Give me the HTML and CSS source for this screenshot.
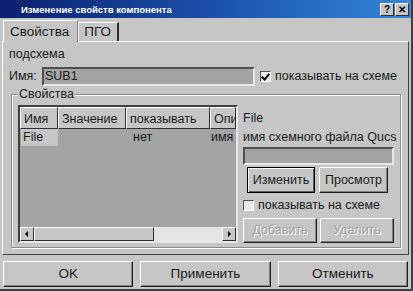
FILE: index.html
```html
<!DOCTYPE html>
<html lang="ru">
<head>
    <meta charset="UTF-8">
    <title>Изменение свойств компонента</title>
    <link rel="stylesheet" href="styles.css">
</head>
<body>
    <div class="dialog">
        <div class="titlebar">
            <span class="title">Изменение свойств компонента</span>
            <div class="title-buttons">
                <span class="title-btn">?</span>
                <span class="title-btn">&#x2715;</span>
            </div>
        </div>

        <div class="tabs">
            <div class="tab active">Свойства</div>
            <div class="tab">ПГО</div>
        </div>

        <div class="panel">
            <div class="caption">подсхема</div>
            <div class="name-row">
                <span class="name-label">Имя:</span>
                <div class="input name-input">SUB1</div>
                <label class="check"><span class="box checked"></span>показывать на схеме</label>
            </div>

            <div class="group">
                <div class="group-title">Свойства</div>
                <div class="group-body">
                    <div class="table">
                        <div class="table-head">
                            <div class="th col-name">Имя</div>
                            <div class="th col-value">Значение</div>
                            <div class="th col-show">показывать</div>
                            <div class="th col-desc">Опи</div>
                        </div>
                        <div class="table-row">
                            <div class="td col-name selected">File</div>
                            <div class="td col-value"></div>
                            <div class="td col-show">нет</div>
                            <div class="td col-desc">имя</div>
                        </div>
                        <div class="table-fill"></div>
                        <div class="scrollbar">
                            <div class="arrow left"></div>
                            <div class="thumb"></div>
                            <div class="track"></div>
                            <div class="arrow right"></div>
                        </div>
                    </div>

                    <div class="editor">
                        <div class="ed-label">File</div>
                        <div class="ed-label">имя схемного файла Qucs</div>
                        <div class="input file-input"></div>
                        <div class="btn-row inner">
                            <div class="btn">Изменить</div>
                            <div class="btn">Просмотр</div>
                        </div>
                        <label class="check"><span class="box"></span>показывать на схеме</label>
                        <div class="btn-row">
                            <div class="btn disabled">Добавить</div>
                            <div class="btn disabled">Удалить</div>
                        </div>
                    </div>
                </div>
            </div>
        </div>

        <div class="footer">
            <div class="btn big">OK</div>
            <div class="btn big">Применить</div>
            <div class="btn big">Отменить</div>
        </div>
    </div>
</body>
</html>
```

FILE: styles.css
```css
body {
    margin: 0;
    font-family: 'Liberation Sans', Arial, sans-serif;
    font-size: 12.5px;
    color: #1a1a1a;
    background: #c6c6c6;
}

.dialog {
    width: 413px;
    height: 291px;
    box-sizing: border-box;
    background: #c6c6c6;
    border-right: 2px solid #404040;
    border-bottom: 2px solid #404040;
    display: flex;
    flex-direction: column;
    overflow: hidden;
}

.titlebar {
    height: 18px;
    flex: none;
    display: flex;
    align-items: center;
    justify-content: space-between;
    padding: 0 2px 0 21px;
    background: linear-gradient(90deg, #0a1f6e 0%, #1b4fa8 50%, #3386dc 100%);
}

.title {
    color: #ffffff;
    font-size: 9.5px;
    font-weight: bold;
}

.title-buttons {
    display: flex;
    gap: 1px;
}

.title-btn {
    width: 12px;
    height: 11px;
    background: #c6c6c6;
    border: 1px solid;
    border-color: #ffffff #303030 #303030 #ffffff;
    font-size: 10px;
    font-weight: bold;
    line-height: 11px;
    text-align: center;
    color: #000000;
}

.tabs {
    display: flex;
    align-items: flex-end;
    height: 22px;
    margin-top: 1px;
    padding-left: 3px;
    flex: none;
}

.tab {
    height: 18px;
    padding: 0 6px 0 5px;
    line-height: 18px;
    font-size: 13.5px;
    border: 1px solid;
    border-color: #ffffff #303030 transparent #ffffff;
    border-bottom: none;
    border-right-width: 2px;
}

.tab.active {
    height: 21px;
    line-height: 21px;
    padding: 0 8px 0 6px;
    border-right-color: #808080;
    border-right-width: 1px;
    position: relative;
    top: 1px;
    background: #c6c6c6;
}

.panel {
    margin: 0 2px;
    height: 214px;
    box-sizing: border-box;
    border: 1px solid;
    border-color: #ffffff #404040 #404040 #ffffff;
    padding: 2px 6px 0 6px;
    display: flex;
    flex-direction: column;
}

.caption {
    height: 20px;
    line-height: 20px;
}

.name-row {
    display: flex;
    align-items: center;
    height: 24px;
}

.name-label {
    width: 33px;
}

.input {
    background: #a4a4a4;
    border: 2px solid;
    border-color: #505050 #e8e8e8 #e8e8e8 #505050;
    box-sizing: border-box;
    color: #1a1a1a;
}

.name-input {
    width: 213px;
    height: 19px;
    line-height: 15px;
    padding-left: 1px;
    margin-right: 5px;
}

.check {
    display: flex;
    align-items: center;
    gap: 4px;
    white-space: nowrap;
}

.box {
    width: 9px;
    height: 9px;
    background: #e8e8e8;
    border: 1px solid;
    border-color: #505050 #ffffff #ffffff #505050;
    position: relative;
}

.box.checked::after {
    content: '';
    position: absolute;
    left: 2px;
    top: 0;
    width: 3px;
    height: 6px;
    border: solid #000000;
    border-width: 0 2px 2px 0;
    transform: rotate(40deg);
}

.group {
    margin: 6px 1px 0 2px;
    height: 154px;
    box-sizing: border-box;
    border: 1px solid #8a8a8a;
    box-shadow: inset 1px 1px 0 #ffffff, 1px 1px 0 #ffffff;
    position: relative;
    padding: 10px 6px 4px 6px;
}

.group-title {
    position: absolute;
    top: -9px;
    left: 6px;
    padding: 0 1px;
    background: #c6c6c6;
    line-height: 16px;
}

.group-body {
    display: flex;
    gap: 5px;
    height: 100%;
}

.table {
    width: 220px;
    flex: none;
    box-sizing: border-box;
    border: 2px solid;
    border-color: #404040 #e8e8e8 #e8e8e8 #404040;
    background: #a4a4a4;
    display: flex;
    flex-direction: column;
    overflow: hidden;
}

.table-head, .table-row {
    display: flex;
    flex: none;
}

.th {
    height: 22px;
    line-height: 22px;
    box-sizing: border-box;
    padding-left: 3px;
    background: #c6c6c6;
    border: 1px solid;
    border-color: #ffffff #303030 #303030 #ffffff;
    white-space: nowrap;
    overflow: hidden;
}

.td {
    height: 17px;
    line-height: 17px;
    padding-left: 2px;
    box-sizing: border-box;
    white-space: nowrap;
    overflow: hidden;
}

.td.selected {
    background: #c6c6c6;
    margin-left: 1px;
}

.col-name { width: 38px; flex: none; }
.col-value { width: 68px; flex: none; }
.col-show { width: 84px; flex: none; }
.col-desc { flex: 1; min-width: 0; }

.td.col-name { width: 37px; }
.td.col-show { padding-left: 7px; }
.td.col-desc { padding-left: 1px; }

.table-fill {
    flex: 1;
}

.scrollbar {
    height: 14px;
    flex: none;
    display: flex;
}

.arrow {
    width: 14px;
    box-sizing: border-box;
    background: #c6c6c6;
    border: 1px solid;
    border-color: #ffffff #303030 #303030 #ffffff;
    position: relative;
}

.arrow::after {
    content: '';
    position: absolute;
    top: 3px;
    border-top: 3px solid transparent;
    border-bottom: 3px solid transparent;
}

.arrow.left::after {
    left: 4px;
    border-right: 3px solid #000000;
}

.arrow.right::after {
    left: 5px;
    border-left: 3px solid #000000;
}

.thumb {
    width: 120px;
    box-sizing: border-box;
    background: #c6c6c6;
    border: 1px solid;
    border-color: #ffffff #303030 #303030 #ffffff;
}

.track {
    flex: 1;
    background: #e4e4e4;
}

.editor {
    flex: 1;
    display: flex;
    flex-direction: column;
    padding-top: 4px;
    min-width: 0;
}

.ed-label {
    height: 19px;
    line-height: 19px;
    white-space: nowrap;
}

.file-input {
    height: 20px;
}

.btn-row {
    display: flex;
    gap: 3px;
    margin-top: 3px;
}

.btn-row.inner {
    padding-left: 4px;
    margin-top: 2px;
    margin-bottom: 2px;
}

.btn {
    height: 26px;
    line-height: 24px;
    box-sizing: border-box;
    text-align: center;
    padding: 0 4px;
    background: #c6c6c6;
    border: 1px solid;
    border-color: #ffffff #202020 #202020 #ffffff;
    box-shadow: inset -1px -1px 0 #808080;
    white-space: nowrap;
}

.btn-row .btn {
    flex: none;
}

.btn-row.inner .btn:first-child {
    border-color: #000000;
    box-shadow: inset 1px 1px 0 #ffffff, inset -1px -1px 0 #606060;
    width: 68px;
}

.btn-row.inner .btn:last-child {
    width: 69px;
    margin-left: 1px;
}

.btn.disabled {
    width: 74px;
    height: 25px;
    line-height: 23px;
    color: #a0a0a0;
    text-shadow: 1px 1px 0 #ffffff;
}

.editor .check {
    height: 22px;
}

.footer {
    display: flex;
    gap: 7px;
    padding: 6px 3px 0 3px;
    flex: 1;
}

.btn.big {
    flex: 1;
    height: 26px;
    line-height: 24px;
    font-size: 13.5px;
}
```
